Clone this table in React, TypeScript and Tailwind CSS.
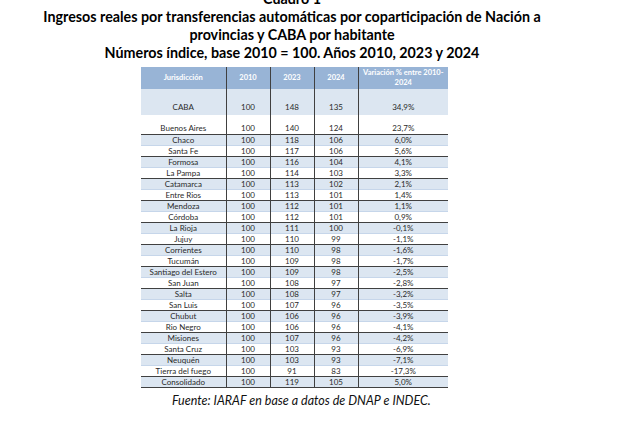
const rows: [string, string, string, string, string][] = [
  ["Chaco", "100", "118", "106", "6,0%"],
  ["Santa Fe", "100", "117", "106", "5,6%"],
  ["Formosa", "100", "116", "104", "4,1%"],
  ["La Pampa", "100", "114", "103", "3,3%"],
  ["Catamarca", "100", "113", "102", "2,1%"],
  ["Entre Rios", "100", "113", "101", "1,4%"],
  ["Mendoza", "100", "112", "101", "1,1%"],
  ["Córdoba", "100", "112", "101", "0,9%"],
  ["La Rioja", "100", "111", "100", "-0,1%"],
  ["Jujuy", "100", "110", "99", "-1,1%"],
  ["Corrientes", "100", "110", "98", "-1,6%"],
  ["Tucumán", "100", "109", "98", "-1,7%"],
  ["Santiago del Estero", "100", "109", "98", "-2,5%"],
  ["San Juan", "100", "108", "97", "-2,8%"],
  ["Salta", "100", "108", "97", "-3,2%"],
  ["San Luis", "100", "107", "96", "-3,5%"],
  ["Chubut", "100", "106", "96", "-3,9%"],
  ["Rio Negro", "100", "106", "96", "-4,1%"],
  ["Misiones", "100", "107", "96", "-4,2%"],
  ["Santa Cruz", "100", "103", "93", "-6,9%"],
  ["Neuquén", "100", "103", "93", "-7,1%"],
  ["Tierra del fuego", "100", "91", "83", "-17,3%"],
  ["Consolidado", "100", "119", "105", "5,0%"],
];

const widths = ["w-[85px]", "w-[44px]", "w-[44px]", "w-[44px]", "w-[90px]"];

const Cells = ({ vals, extra }: { vals: string[]; extra: string }) => (
  <>
    {vals.map((v, j) => (
      <td key={j} className={`${widths[j]} p-0 text-center ${extra} ${j > 0 ? "border-l border-l-[#404040]" : ""}`}>
        {v}
      </td>
    ))}
  </>
);

export default function App() {
  return (
    <div className="h-[421px] w-[626px] overflow-hidden bg-white font-['Lato',sans-serif] text-black">
      <div className="-mt-[10px] w-[584px] text-center text-[14.3px] font-bold leading-[18px]">
        <p>Cuadro 1</p>
        <p>Ingresos reales por transferencias automáticas por coparticipación de Nación a</p>
        <p>provincias y CABA por habitante</p>
        <p>Números índice, base 2010 = 100. Años 2010, 2023 y 2024</p>
      </div>

      <table className="ml-[141px] mt-[5px] w-[307px] table-fixed border-collapse text-[8px] text-[#2a2a2a]">
        <thead>
          <tr className="h-[22px] bg-[#98b4d6] text-[7.5px] font-bold text-white">
            <td className="w-[85px] p-0 text-center align-middle">Jurisdicción</td>
            <td className="w-[44px] border-l border-l-[#404040] p-0 text-center align-middle">2010</td>
            <td className="w-[44px] border-l border-l-[#404040] p-0 text-center align-middle">2023</td>
            <td className="w-[44px] border-l border-l-[#404040] p-0 text-center align-middle">2024</td>
            <td className="w-[90px] border-l border-l-[#404040] p-0 text-center align-middle leading-[10.5px]">
              Variación % entre 2010-
              <br />
              2024
            </td>
          </tr>
        </thead>
        <tbody>
          <tr className="h-[26px] bg-[#dce6f1] leading-[10px]">
            <Cells vals={["CABA", "100", "148", "135", "34,9%"]} extra="align-bottom pb-[3px]" />
          </tr>
          <tr className="h-[19px] border-b border-b-[#404040] bg-white leading-[10px]">
            <Cells vals={["Buenos Aires", "100", "140", "124", "23,7%"]} extra="align-bottom pb-[1px]" />
          </tr>
          {rows.map((r, i) => (
            <tr
              key={r[0]}
              className={`h-[10px] leading-[10px] ${i % 2 === 0 ? "bg-[#dce6f1]" : "bg-white"} ${
                i % 2 === 1 || i === rows.length - 1 ? "border-b border-b-[#404040]" : "border-b border-b-[#c6d6ea]"
              }`}
            >
              <Cells vals={r} extra="align-middle" />
            </tr>
          ))}
        </tbody>
      </table>

      <p className="ml-[172px] mt-[5px] text-[12.5px] italic leading-[16px] text-[#111]">
        Fuente: IARAF en base a datos de DNAP e INDEC.
      </p>
    </div>
  );
}
